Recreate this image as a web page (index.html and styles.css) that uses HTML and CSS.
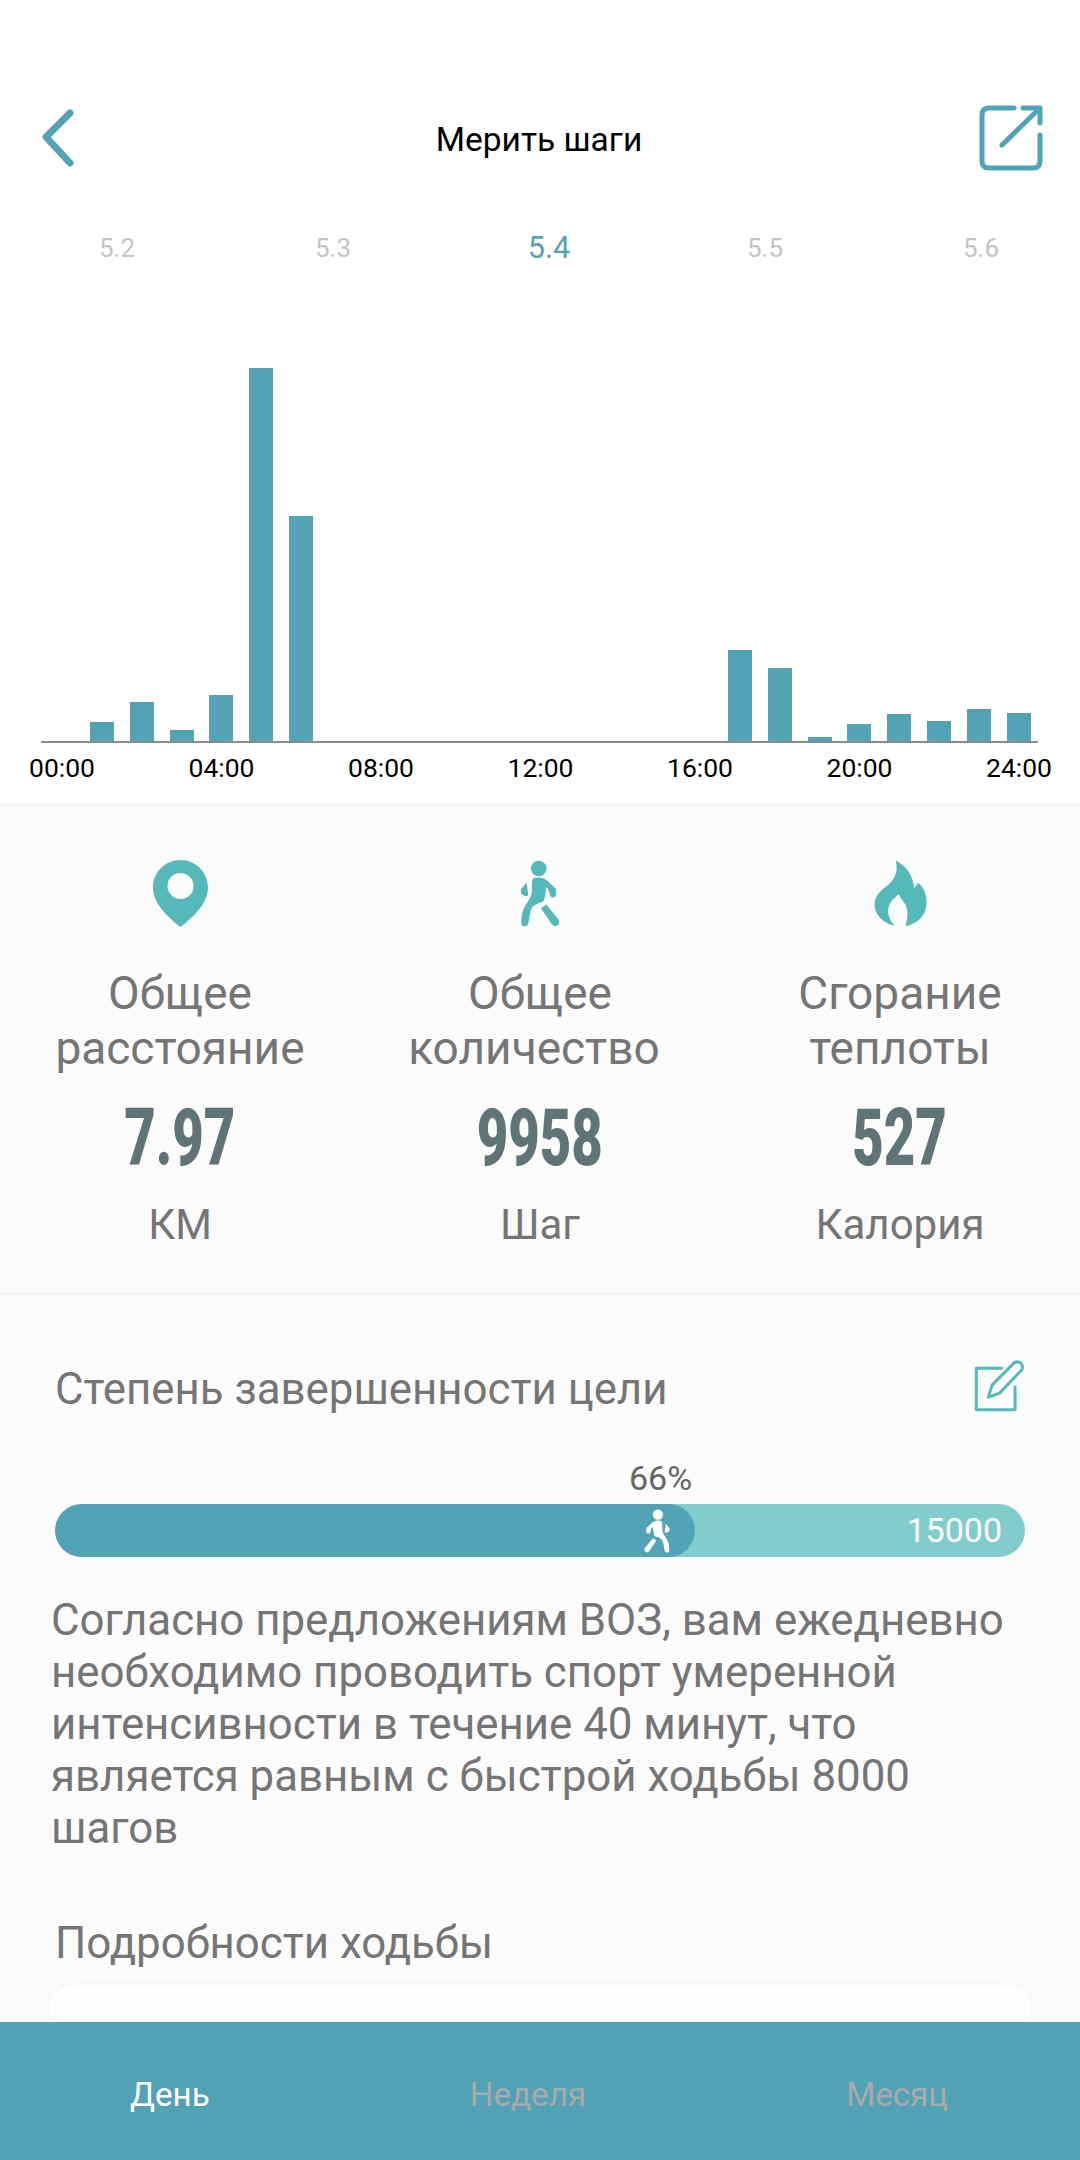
FILE: index.html
```html
<!DOCTYPE html>
<html lang="ru">
  <head>
    <meta charset="utf-8">
    <title>Мерить шаги</title>
    <link rel="stylesheet" href="styles.css">
  </head>
  <body>
    <svg class="defs" width="0" height="0">
      <symbol id="walker" viewBox="88 58 122 206">
        <circle cx="145" cy="84" r="24" />
        <path d="M128 114C145 109 163 112 174 124L196 145C199 150 200 165 197 170C193 174 184 174 181 170L176 150L167 141C167 160 165 178 158 186C145 190 130 195 124 205C116 222 118 240 112 256C108 264 96 264 92 256C90 235 94 215 104 198C114 182 124 170 124 150C124 135 124 122 128 114Z" />
        <path d="M152 206L168 195L206 241C210 248 208 258 200 261C194 263 190 260 186 256Z" />
        <path d="M108 127L113 165L110 169C104 170 96 166 91 160C89 155 90 150 92 146Z" />
      </symbol>
    </svg>

    <div class="phone">
      <div class="top">
        <div class="nav">
          <svg class="back-icon" viewBox="0 0 44 66">
            <polyline points="34,7 10,31 34,57" />
          </svg>
          <h1 class="nav-title">Мерить шаги</h1>
          <svg class="share-icon" viewBox="0 0 66 68">
            <path d="M36 4H11Q4 4 4 11V57Q4 64 11 64H55Q62 64 62 57V31" />
            <path d="M45 4H62V19M62 4L24 41" />
          </svg>
        </div>

        <div class="dates">
          <span>5.2</span>
          <span>5.3</span>
          <span class="active">5.4</span>
          <span>5.5</span>
          <span>5.6</span>
        </div>

        <div class="chart" id="chart"></div>

        <div class="hours">
          <span>00:00</span>
          <span>04:00</span>
          <span>08:00</span>
          <span>12:00</span>
          <span>16:00</span>
          <span>20:00</span>
          <span>24:00</span>
        </div>
      </div>

      <div class="stats">
        <div class="stat">
          <svg class="stat-icon" viewBox="0 0 55 67">
            <path fill-rule="evenodd" d="M27.5 0C12.3 0 0 12.3 0 27.5C0 44 16 58 27.5 67C39 58 55 44 55 27.5C55 12.3 42.7 0 27.5 0ZM27.5 13A13 13 0 1 1 27.5 39A13 13 0 1 1 27.5 13Z" />
          </svg>
          <div class="stat-label">Общее<br>расстояние</div>
          <div class="stat-num"><span>7.97</span></div>
          <div class="stat-unit">КМ</div>
        </div>
        <div class="stat">
          <svg class="stat-icon walker-big"><use href="#walker" /></svg>
          <div class="stat-label">Общее<br><span class="shift">количество</span></div>
          <div class="stat-num"><span>9958</span></div>
          <div class="stat-unit">Шаг</div>
        </div>
        <div class="stat">
          <svg class="stat-icon" viewBox="68 58 164 206">
            <path d="M135 60C165 72 190 105 192 145L205 128C225 145 232 175 230 195C228 230 200 255 165 262C172 240 175 215 165 195C158 182 148 172 145 163C130 175 112 190 112 215C112 235 122 250 132 260C95 252 70 225 70 195C70 170 90 150 105 140C130 122 145 95 135 60Z" />
          </svg>
          <div class="stat-label">Сгорание<br>теплоты</div>
          <div class="stat-num"><span>527</span></div>
          <div class="stat-unit">Калория</div>
        </div>
      </div>

      <div class="goal">
        <div class="goal-head">
          <h2 class="section-title">Степень завершенности цели</h2>
          <svg class="edit-icon" viewBox="40 30 160 160">
            <path d="M130 55H50V180H167V108" />
            <path d="M86 142L98 105L165 38Q175 32 185 40Q193 50 187 60L120 130Z" />
          </svg>
        </div>
        <div class="goal-percent">66%</div>
        <div class="progress">
          <div class="progress-fill" style="width: 66%">
            <svg class="walker-small"><use href="#walker" /></svg>
          </div>
          <span class="progress-total">15000</span>
        </div>
        <p class="goal-text">Согласно предложениям ВОЗ, вам ежедневно необходимо проводить спорт умеренной интенсивности в течение 40 минут, что является равным с быстрой ходьбы 8000 шагов</p>
        <h2 class="section-title details-title">Подробности ходьбы</h2>
        <div class="details-card"></div>
      </div>

      <div class="tabs">
        <span class="active">День</span>
        <span>Неделя</span>
        <span>Месяц</span>
      </div>
    </div>

    <script src="chart.js"></script>
  </body>
</html>
```

FILE: styles.css
```css
* {
  margin: 0;
  padding: 0;
  box-sizing: border-box;
}

body {
  font-family: Roboto, "Noto Sans", sans-serif;
  background: #fbfbfb;
  color: #757575;
}

.defs {
  position: absolute;
}

.phone {
  position: relative;
  width: 1080px;
  height: 2160px;
  overflow: hidden;
}

.top {
  height: 804px;
  background: white;
  box-shadow: 0 1px 6px rgba(0, 0, 0, 0.08);
  overflow: hidden;
}

.nav {
  display: grid;
  grid-template-columns: 1fr auto 1fr;
  align-items: center;
  height: 66px;
  margin-top: 106px;
  padding: 0 36px;
}

.back-icon {
  width: 44px;
  height: 66px;
  fill: none;
  stroke: #53a3b7;
  stroke-width: 7;
  stroke-linecap: round;
  stroke-linejoin: round;
}

.nav-title {
  font-size: 33.5px;
  font-weight: 400;
  color: black;
  margin-right: 2px;
}

.share-icon {
  justify-self: end;
  width: 66px;
  height: 68px;
  margin-top: -2px;
  fill: none;
  stroke: #53a3b7;
  stroke-width: 5;
  stroke-linecap: round;
  stroke-linejoin: round;
}

.dates {
  display: grid;
  grid-template-columns: repeat(5, 216px);
  margin: 56px 0 0 9px;
  height: 40px;
  line-height: 40px;
  text-align: center;
  font-size: 26px;
  color: #c4c4c4;
}

.dates .active {
  font-size: 30.5px;
  color: #53a3b7;
}

.chart {
  display: flex;
  align-items: flex-end;
  height: 475px;
  margin: 0 42px 0 41px;
  border-bottom: 2px solid #8c8c8c;
}

.chart-slot {
  flex: 1;
  display: flex;
  justify-content: center;
  align-items: flex-end;
  height: 100%;
  padding-left: 2px;
}

.chart-bar {
  width: 24px;
  background: #53a3b7;
}

.hours {
  display: flex;
  justify-content: space-between;
  margin-top: 10px;
  padding: 0 28px 0 29px;
  line-height: 30px;
  font-size: 26.5px;
  color: black;
}

.stats {
  display: grid;
  grid-template-columns: repeat(3, 360px);
  height: 490px;
  padding-top: 56px;
  border-bottom: 1px solid #ececec;
  text-align: center;
}

.stat-icon {
  display: block;
  height: 67px;
  width: 55px;
  margin: 0 auto;
  fill: #55b9b9;
}

.walker-big {
  width: 40px;
}

.stat-label {
  margin-top: 39px;
  font-size: 46px;
  line-height: 55px;
}

.shift {
  display: block;
  padding-right: 12px;
}

.stat-num {
  margin-top: 12px;
  height: 100px;
  line-height: 100px;
  font-size: 80px;
  font-weight: 900;
  color: #5f7478;
}

.stat-num span {
  display: inline-block;
  transform: scaleX(0.68);
}

.stat-unit {
  margin-top: 12px;
  font-size: 42px;
  line-height: 50px;
}

.goal {
  padding: 0 55px;
}

.goal-head {
  display: flex;
  justify-content: space-between;
  align-items: center;
  height: 60px;
  margin-top: 65px;
}

.section-title {
  font-size: 43.8px;
  font-weight: 400;
}

.edit-icon {
  width: 53px;
  height: 53px;
  margin: -6px -1px 0 0;
  fill: none;
  stroke: #55b9b9;
  stroke-width: 9;
  stroke-linejoin: round;
}

.goal-percent {
  width: 60px;
  margin: 39px 0 0 574px;
  line-height: 40px;
  font-size: 34px;
  text-align: center;
  color: #666;
}

.progress {
  display: flex;
  height: 53px;
  margin-top: 6px;
  border-radius: 27px;
  background: #82cdcc;
  overflow: hidden;
}

.progress-fill {
  display: flex;
  justify-content: flex-end;
  align-items: center;
  border-radius: 27px;
  background: #53a3b7;
  padding-right: 24px;
}

.walker-small {
  width: 28px;
  height: 44px;
  fill: white;
  transform: scaleX(-1);
}

.progress-total {
  margin-left: auto;
  padding-right: 23px;
  line-height: 53px;
  font-size: 34px;
  color: white;
}

.goal-text {
  margin: 37px -10px 0 -4px;
  font-size: 43.8px;
  line-height: 52px;
}

.details-title {
  margin-top: 64px;
  line-height: 50px;
}

.details-card {
  height: 200px;
  margin: 17px -6px 0;
  border-radius: 24px;
  background: #fffefd;
  box-shadow: 0 0 10px rgba(0, 0, 0, 0.03);
}

.tabs {
  position: absolute;
  left: 0;
  right: 0;
  bottom: 0;
  display: flex;
  justify-content: space-between;
  align-items: center;
  height: 138px;
  padding: 6px 132px 0 130px;
  background: #52a2b6;
  font-size: 33.2px;
  color: #a9a9a9;
}

.tabs .active {
  color: white;
}
```

FILE: chart.js
```js
// bar heights in px, index = hour (0..24)
const heights = [0, 19, 39, 11, 46, 373, 225, 0, 0, 0, 0, 0, 0, 0, 0, 0, 0, 91, 73, 4, 17, 27, 20, 32, 28];
const chart = document.getElementById("chart");

heights.forEach((h) => {
  const slot = document.createElement("div");
  slot.className = "chart-slot";
  const bar = document.createElement("div");
  bar.className = "chart-bar";
  bar.style.height = h + "px";
  slot.appendChild(bar);
  chart.appendChild(slot);
});
```
